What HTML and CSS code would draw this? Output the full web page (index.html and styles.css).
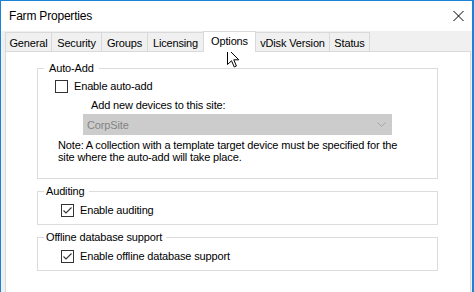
FILE: index.html
```html
<!DOCTYPE html>
<html lang="en">
<head>
<meta charset="utf-8">
<title>Farm Properties</title>
<link rel="stylesheet" href="styles.css">
</head>
<body>
<div class="window">
  <div class="titlebar">
    <span class="title">Farm Properties</span>
    <svg class="close" width="11" height="10" viewBox="0 0 11 10"><path d="M0.5 0 L10.5 10 M10.5 0 L0.5 10" stroke="#000" stroke-width="1" fill="none"/></svg>
  </div>
  <div class="client">
    <div class="tabs">
      <div class="tab tab-general">General</div>
      <div class="tab tab-security">Security</div>
      <div class="tab tab-groups">Groups</div>
      <div class="tab tab-licensing">Licensing</div>
      <div class="tab tab-options">Options</div>
      <div class="tab tab-vdisk">vDisk Version</div>
      <div class="tab tab-status">Status</div>
    </div>
    <div class="panel">
      <fieldset class="group group-autoadd">
        <legend class="legend legend-wide">Auto-Add</legend>
        <label class="check check-autoadd"><span class="box"></span><span>Enable auto-add</span></label>
        <div class="site-label">Add new devices to this site:</div>
        <div class="combo"><span class="combo-text">CorpSite</span><svg class="chevron" width="9" height="5" viewBox="0 0 9 5"><polyline points="0.5,0.5 4.5,4.5 8.5,0.5" fill="none" stroke="#a6a6a6" stroke-width="1"/></svg></div>
        <p class="note">Note: A collection with a template target device must be specified for the<br>site where the auto-add will take place.</p>
      </fieldset>
      <fieldset class="group">
        <legend class="legend">Auditing</legend>
        <label class="check"><span class="box"><svg width="11" height="11" viewBox="0 0 11 11"><polyline points="1.5,5.5 4,8 9.5,2.5" fill="none" stroke="#333" stroke-width="1.1"/></svg></span><span>Enable auditing</span></label>
      </fieldset>
      <fieldset class="group">
        <legend class="legend">Offline database support</legend>
        <label class="check"><span class="box"><svg width="11" height="11" viewBox="0 0 11 11"><polyline points="1.5,5.5 4,8 9.5,2.5" fill="none" stroke="#333" stroke-width="1.1"/></svg></span><span>Enable offline database support</span></label>
      </fieldset>
    </div>
  </div>
</div>
<svg class="cursor" width="13" height="20" viewBox="0 0 13 20"><polygon points="0.5,0.5 0.5,16.5 4.5,12.8 7.3,19 9.4,18 6.8,11.8 11.8,11.8" fill="#fff" stroke="#000" stroke-width="1" stroke-linejoin="miter"/></svg>
</body>
</html>
```
FILE: styles.css
```css
* { box-sizing: border-box; }
html, body { margin: 0; padding: 0; }
body {
  width: 474px;
  height: 292px;
  overflow: hidden;
  background: #fff;
  font-family: "Liberation Sans", Arial, sans-serif;
  font-size: 11px;
  letter-spacing: -0.15px;
  color: #000;
}
.window {
  width: 474px;
  height: 292px;
  border: 1px solid #1883d7;
  border-right-width: 2px;
  border-bottom: 0;
  display: flex;
  flex-direction: column;
}
.titlebar {
  height: 30px;
  flex: none;
  background: #fff;
  display: flex;
  align-items: center;
  justify-content: space-between;
  padding: 0 8px;
}
.title { font-size: 12px; line-height: 30px; letter-spacing: -0.2px; }
.close { display: block; margin-top: -1px; }
.client {
  flex: 1;
  min-height: 0;
  background: #f0f0f0;
  display: flex;
  flex-direction: column;
}
.tabs {
  flex: none;
  height: 20px;
  display: flex;
  align-items: flex-end;
  padding-left: 4px;
}
.tab {
  height: 19px;
  border: 1px solid #d9d9d9;
  border-left: 0;
  border-bottom: 0;
  padding-top: 2px;
  line-height: 16px;
  text-align: center;
  white-space: nowrap;
  background: #f0f0f0;
}
.tab-general { width: 47px; border-left: 1px solid #d9d9d9; }
.tab-security { width: 50px; }
.tab-groups { width: 46px; }
.tab-licensing { width: 56px; }
.tab-options {
  width: 53px;
  height: 21px;
  margin-left: -1px;
  margin-bottom: -1px;
  border-left: 1px solid #d9d9d9;
  background: #fff;
  padding-top: 1px;
  position: relative;
  z-index: 1;
}
.tab-vdisk { width: 74px; }
.tab-status { width: 40px; }
.panel {
  flex: 1;
  margin: 0 1px 0 4px;
  background: #fff;
  border: 1px solid #d9d9d9;
  border-bottom: 0;
  padding: 10px 0 0 31px;
}
.group {
  width: 401px;
  min-width: 0;
  margin: 0 0 6px 0;
  padding: 0 0 7px 0;
  border: 1px solid #dcdcdc;
}
.group-autoadd { padding-bottom: 15px; }
.legend {
  margin-left: 6px;
  padding: 0 4px 0 2px;
  line-height: 13px;
}
.legend-wide { padding: 0 5px; }
.check {
  display: flex;
  align-items: center;
  gap: 6px;
  margin: 6px 0 0 23px;
  line-height: 13px;
}
.check-autoadd { margin: 5px 0 0 17px; }
.box {
  width: 13px;
  height: 13px;
  flex: none;
  border: 1px solid #333;
  background: #fff;
  display: flex;
}
.box svg { display: block; }
.site-label {
  margin: 6px 0 0 53px;
  line-height: 13px;
}
.combo {
  width: 309px;
  height: 21px;
  margin: 2px 0 0 45px;
  background: #cccccc;
  border: 1px solid #cccccc;
  display: flex;
  align-items: center;
  justify-content: space-between;
  padding: 0 5px 0 3px;
  color: #838383;
}
.chevron { display: block; }
.note {
  margin: 4px 0 0 20px;
  line-height: 12px;
}
.cursor {
  position: absolute;
  left: 227px;
  top: 48px;
  pointer-events: none;
}
```
